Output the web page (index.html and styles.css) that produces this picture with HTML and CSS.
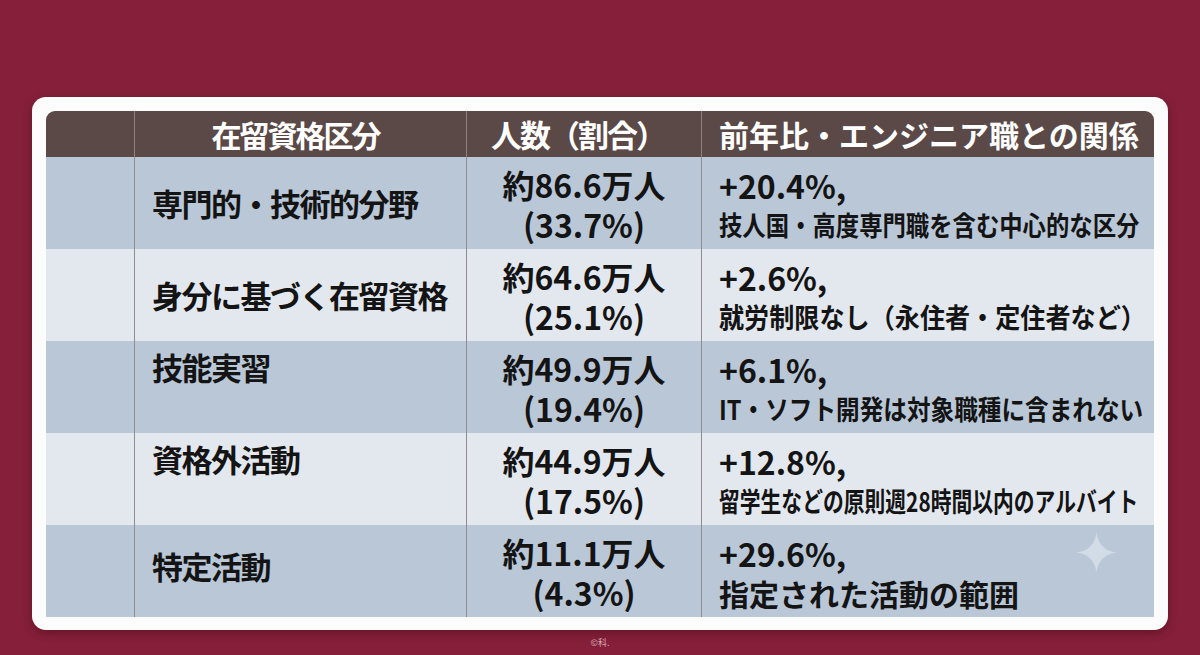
FILE: index.html
```html
<!DOCTYPE html>
<html lang="ja">
<head>
<meta charset="utf-8">
<title>在留資格区分</title>
<link rel="stylesheet" href="styles.css">
</head>
<body>
<main class="page">
  <section class="card">
    <div class="table">
      <div class="row head">
        <div class="cell c1"></div>
        <div class="cell c2 center"><span class="h-narrow">在留資格区分</span></div>
        <div class="cell c3 center">人数（割合）</div>
        <div class="cell c4">前年比・エンジニア職との関係</div>
      </div>

      <div class="row dark">
        <div class="cell c1"></div>
        <div class="cell c2 label">専門的・技術的分野</div>
        <div class="cell c3 num"><span>約86.6万人</span><span>(33.7%)</span></div>
        <div class="cell c4 desc"><span class="rate">+20.4%,</span><span class="note fit-a">技人国・高度専門職を含む中心的な区分</span></div>
      </div>

      <div class="row light">
        <div class="cell c1"></div>
        <div class="cell c2 label">身分に基づく在留資格</div>
        <div class="cell c3 num"><span>約64.6万人</span><span>(25.1%)</span></div>
        <div class="cell c4 desc"><span class="rate">+2.6%,</span><span class="note fit-b">就労制限なし（永住者・定住者など）</span></div>
      </div>

      <div class="row dark">
        <div class="cell c1"></div>
        <div class="cell c2 label top">技能実習</div>
        <div class="cell c3 num"><span>約49.9万人</span><span>(19.4%)</span></div>
        <div class="cell c4 desc"><span class="rate">+6.1%,</span><span class="note fit-c">IT・ソフト開発は対象職種に含まれない</span></div>
      </div>

      <div class="row light">
        <div class="cell c1"></div>
        <div class="cell c2 label top">資格外活動</div>
        <div class="cell c3 num"><span>約44.9万人</span><span>(17.5%)</span></div>
        <div class="cell c4 desc"><span class="rate">+12.8%,</span><span class="note fit-d">留学生などの原則週28時間以内のアルバイト</span></div>
      </div>

      <div class="row dark last">
        <div class="cell c1"></div>
        <div class="cell c2 label raised">特定活動</div>
        <div class="cell c3 num"><span>約11.1万人</span><span>(4.3%)</span></div>
        <div class="cell c4 desc"><span class="rate">+29.6%,</span><span class="note big">指定された活動の範囲</span></div>
        <svg class="sparkle" viewBox="0 0 40 40" aria-hidden="true">
          <path d="M20 0 Q22 18 40 20 Q22 22 20 40 Q18 22 0 20 Q18 18 20 0 Z"/>
        </svg>
      </div>
    </div>
  </section>
  <p class="credit">©科.</p>
</main>
</body>
</html>
```

FILE: styles.css
```css
* { box-sizing: border-box; }

html, body {
  margin: 0;
  padding: 0;
}

body {
  width: 1200px;
  height: 655px;
  overflow: hidden;
  background: #851f3a;
  font-family: "Noto Sans CJK JP", "Noto Sans", sans-serif;
  font-weight: 700;
  color: #141414;
}

.page {
  padding-top: 97px;
}

.card {
  margin: 0 32px;
  height: 533px;
  padding: 14px 14px 13px;
  background: #fdfcfc;
  border-radius: 14px;
  box-shadow: 0 3px 8px rgba(40, 0, 10, 0.35);
}

.table {
  display: flex;
  flex-direction: column;
  width: 1108px;
  border-radius: 9px 9px 0 0;
  overflow: hidden;
}

.row {
  display: grid;
  grid-template-columns: 88px 332px 235px 453px;
  height: 92px;
}

.row.head {
  height: 46px;
  background: #5a4947;
  color: #ffffff;
  font-size: 31px;
  line-height: 46px;
}

.row.dark { background: #b9c7d7; }
.row.light { background: #e3e8ef; }
.row.last { position: relative; }

.cell {
  display: flex;
  flex-direction: column;
  justify-content: center;
  white-space: nowrap;
}

.cell.c2, .cell.c3, .cell.c4 {
  border-left: 1px solid #8d8d90;
}

.head .cell.c2, .head .cell.c3, .head .cell.c4 {
  border-left-color: #8f8280;
}

.head .cell { display: block; }

.head .center { text-align: center; }

.head .c2 { padding-right: 10px; }

.h-narrow {
  font-size: 30px;
  letter-spacing: -2px;
}

.head .c3 {
  padding-right: 12px;
  letter-spacing: -2px;
}

.head .c4 {
  padding-left: 17px;
  font-size: 30px;
}

.label {
  padding-left: 17px;
  font-size: 31px;
  letter-spacing: -1.5px;
  line-height: 40px;
}

.label.top {
  justify-content: flex-start;
  padding-top: 6px;
}

.label.raised {
  padding-bottom: 10px;
}

.num {
  align-items: center;
  font-size: 32px;
  line-height: 40px;
  padding-top: 2px;
}

.desc {
  padding-left: 17px;
  padding-top: 4px;
}

.rate {
  font-size: 32px;
  line-height: 40px;
}

.note {
  display: inline-block;
  width: max-content;
  font-size: 27px;
  line-height: 40px;
  transform-origin: left center;
}

.note.fit-a { transform: scaleX(0.865); }
.note.fit-b { transform: scaleX(0.93); }
.note.fit-c { transform: scaleX(0.875); }
.note.fit-d { transform: scaleX(0.77); }

.note.big {
  font-size: 30px;
}

.sparkle {
  position: absolute;
  left: 1030px;
  top: 7px;
  width: 41px;
  height: 41px;
  fill: #d2dce7;
}

.credit {
  margin: 0;
  height: 25px;
  line-height: 25px;
  text-align: center;
  font-size: 9px;
  font-weight: 400;
  color: #d9a7b4;
}
```
